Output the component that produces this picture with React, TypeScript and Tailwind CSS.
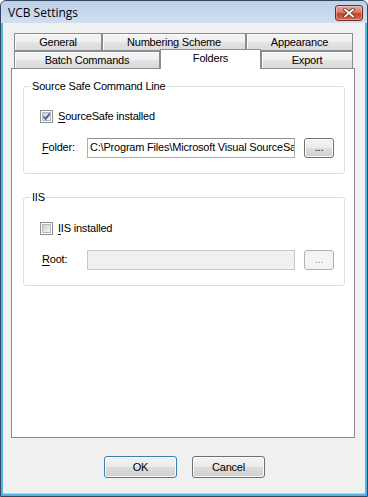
import React from 'react'

const font = "font-['Liberation_Sans',Arial,sans-serif] text-[11px] tracking-[-0.2px] text-black"

const btnBg =
  'bg-[linear-gradient(#f2f2f2_0%,#ebebeb_50%,#dddddd_50%,#cfcfcf_100%)] shadow-[inset_0_0_0_1px_#fbfbfb]'

function CloseButton() {
  return (
    <div className="w-[28px] h-[16px] rounded-[3px] border border-[#6b2d26] bg-[linear-gradient(#e9a99b_0%,#d97865_45%,#c2432e_55%,#d6694f_100%)] shadow-[inset_0_0_0_1px_rgba(255,255,255,0.35)] flex items-center justify-center">
      <svg width="12" height="10" viewBox="0 0 12 10">
        <path d="M2 1.5 L10 8.5 M10 1.5 L2 8.5" stroke="#5a2a24" strokeWidth="3.4" strokeLinecap="square" />
        <path d="M2 1.5 L10 8.5 M10 1.5 L2 8.5" stroke="#ffffff" strokeWidth="1.9" strokeLinecap="square" />
      </svg>
    </div>
  )
}

function Checkbox({ checked }: { checked?: boolean }) {
  return (
    <div className="w-[13px] h-[13px] border border-[#8e8f8f] bg-white p-[1px] shrink-0">
      <div className="w-full h-full bg-[linear-gradient(135deg,#c9ccd1_0%,#e4e5e7_60%,#f4f4f4_100%)] border border-[#b4b8bd] relative">
        {checked && (
          <svg className="absolute -left-[2px] -top-[2px]" width="11" height="11" viewBox="0 0 11 11">
            <path d="M2.5 5.5 L4.6 7.8 L8.8 2.6" fill="none" stroke="#4a5f97" strokeWidth="1.8" />
          </svg>
        )}
      </div>
    </div>
  )
}

function Tab({ label, w, row1 }: { label: string; w: string; row1?: boolean }) {
  return (
    <div
      className={`${w} ${row1 ? 'h-[18px] border' : 'h-full border border-b-0'} border-[#898c95] bg-[linear-gradient(#f4f4f4_0%,#f0f0f0_45%,#e3e3e3_55%,#d9d9d9_100%)] shadow-[inset_1px_1px_0_#fdfdfd] flex items-center justify-center leading-none`}
    >
      {label}
    </div>
  )
}

function GroupBox({ title, h, mt, children }: { title: string; h: string; mt: string; children: React.ReactNode }) {
  return (
    <div className={`relative ${mt} ${h} ml-[11px] w-[322px] border border-[#d5dfe5] rounded-[3px] pl-[16px]`}>
      <span className="absolute left-[7px] -top-[7px] px-[1px] bg-white leading-[13px]">{title}</span>
      {children}
    </div>
  )
}

function PathRow({ label, value, disabled }: { label: React.ReactNode; value: string; disabled?: boolean }) {
  return (
    <div className="flex items-center ml-[2px]">
      <div className="w-[45px]">{label}</div>
      <div
        className={`w-[208px] h-[20px] border ${
          disabled ? 'border-[#c9c9c9] bg-[#f0f0f0]' : 'border-[#abadb3] border-t-[#8e9196] bg-white'
        } flex items-center pl-[2px] overflow-hidden whitespace-nowrap`}
      >
        {value}
      </div>
      <div
        className={`ml-[9px] w-[30px] h-[20px] rounded-[3px] border flex items-center justify-center leading-none ${
          disabled ? 'border-[#adb2b5] bg-[#f4f4f4] text-[#a0a0a0]' : `border-[#707070] ${btnBg}`
        }`}
      >
        ...
      </div>
    </div>
  )
}

export default function App() {
  return (
    <div className={`${font} w-[368px] h-[497px] border border-[#34475c] rounded-t-[6px] bg-[#4fb4e4] flex flex-col overflow-hidden`}>
      {/* title bar */}
      <div className="h-[22px] shrink-0 bg-[linear-gradient(#bcd1ea,#d0dff2)] flex items-center justify-between pl-[7px] pr-[4px] pt-[1px]">
        <span className="font-['Open_Sans',Arial,sans-serif] text-[12px] tracking-normal">VCB Settings</span>
        <CloseButton />
      </div>

      {/* client */}
      <div className="flex-1 mx-[2px] mb-[2px] bg-[#f0f0f0] border-b border-[#a9dff5] flex flex-col">
        <div className="mt-[10px] ml-[8px] w-[344px]">
          <div className="flex pl-[3px]">
            <Tab row1 label="General" w="w-[88px]" />
            <Tab row1 label="Numbering Scheme" w="w-[144px]" />
            <Tab row1 label="Appearance" w="w-[107px]" />
          </div>
          <div className="flex items-end h-[17px] pl-[3px]">
            <Tab label="Batch Commands" w="w-[146px]" />
            <div className="relative z-10 w-[101px] h-[20px] -mb-px border border-b-0 border-[#898c95] bg-white flex items-start justify-center pt-[3px] leading-none">
              Folders
            </div>
            <Tab label="Export" w="w-[92px]" />
          </div>

          {/* tab page */}
          <div className="h-[370px] border border-[#898c95] bg-white">
            <GroupBox title="Source Safe Command Line" h="h-[88px]" mt="mt-[17px]">
              <div className="flex items-center mt-[21px] gap-[5px]">
                <Checkbox checked />
                <span>
                  <u className="underline-offset-2">S</u>ourceSafe installed
                </span>
              </div>
              <div className="mt-[13px]">
                <PathRow
                  label={
                    <>
                      <u className="underline-offset-2">F</u>older:
                    </>
                  }
                  value="C:\Program Files\Microsoft Visual SourceSafe"
                />
              </div>
            </GroupBox>

            <GroupBox title="IIS" h="h-[89px]" mt="mt-[23px]">
              <div className="flex items-center mt-[22px] gap-[5px]">
                <Checkbox />
                <span>
                  <u className="underline-offset-2">I</u>IS installed
                </span>
              </div>
              <div className="mt-[13px]">
                <PathRow
                  label={
                    <>
                      <u className="underline-offset-2">R</u>oot:
                    </>
                  }
                  value=""
                  disabled
                />
              </div>
            </GroupBox>
          </div>
        </div>

        {/* dialog buttons */}
        <div className="flex justify-center gap-[15px] mt-[18px] pl-[1px]">
          <div className={`w-[73px] h-[22px] rounded-[3px] border border-[#3c7fb1] ${btnBg} shadow-[inset_0_0_0_1px_#7fd6f7] flex items-center justify-center leading-none`}>
            OK
          </div>
          <div className={`w-[73px] h-[22px] rounded-[3px] border border-[#707070] ${btnBg} flex items-center justify-center leading-none`}>
            Cancel
          </div>
        </div>
      </div>
    </div>
  )
}
